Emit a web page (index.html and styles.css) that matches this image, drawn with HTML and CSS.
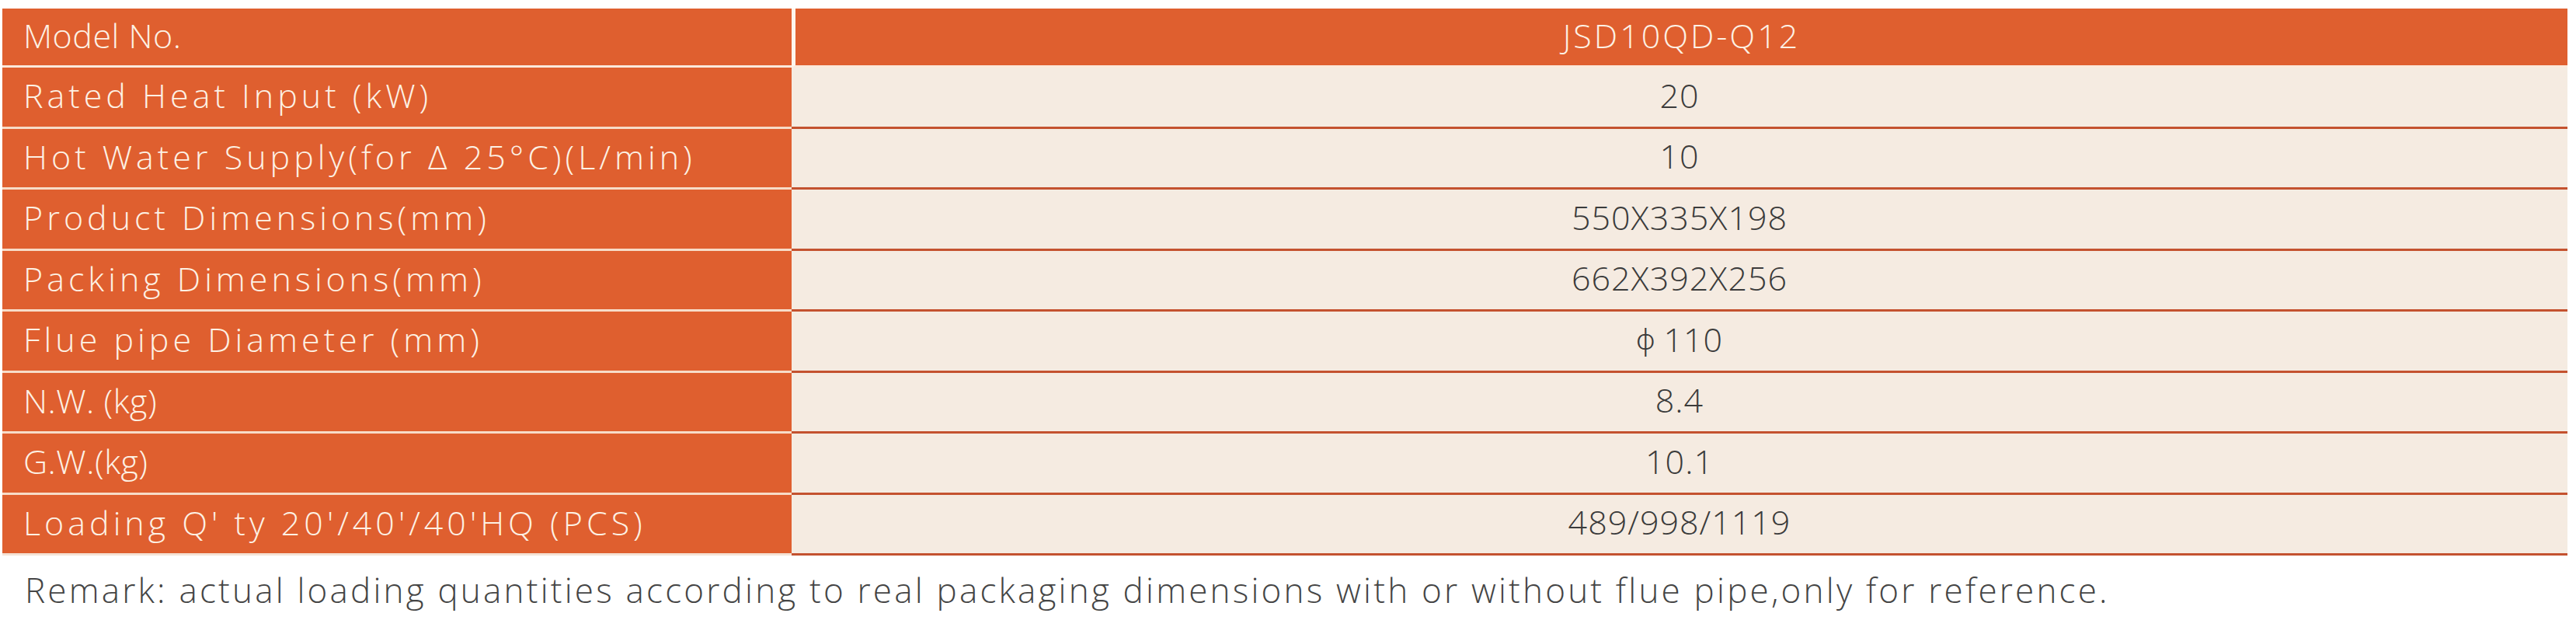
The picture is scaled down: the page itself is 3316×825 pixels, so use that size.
FILE: index.html
```html
<!DOCTYPE html>
<html lang="en">
<head>
<meta charset="utf-8">
<title>JSD10QD-Q12 Specifications</title>
<link rel="stylesheet" href="styles.css">
</head>
<body>
<div class="sheet">
  <div class="spec">
    <div class="row head"><div class="label tight">Model No.</div><div class="value">JSD10QD-Q12</div></div>
    <div class="row"><div class="label">Rated Heat Input (kW)</div><div class="value">20</div></div>
    <div class="row"><div class="label">Hot Water Supply(for Δ 25°C)(L/min)</div><div class="value">10</div></div>
    <div class="row"><div class="label">Product Dimensions(mm)</div><div class="value">550X335X198</div></div>
    <div class="row"><div class="label">Packing Dimensions(mm)</div><div class="value">662X392X256</div></div>
    <div class="row"><div class="label">Flue pipe Diameter (mm)</div><div class="value"><span class="phi">ϕ</span>110</div></div>
    <div class="row"><div class="label tight">N.W. (kg)</div><div class="value">8.4</div></div>
    <div class="row"><div class="label tight">G.W.(kg)</div><div class="value">10.1</div></div>
    <div class="row last"><div class="label">Loading Q' ty 20'/40'/40'HQ (PCS)</div><div class="value">489/998/1119</div></div>
  </div>
  <p class="remark">Remark: actual loading quantities according to real packaging dimensions with or without flue pipe,only for reference.</p>
</div>
</body>
</html>
```
FILE: styles.css
```css
html, body {
  margin: 0;
  padding: 0;
  background: #ffffff;
}

body {
  font-family: "Open Sans", "Noto Sans CJK SC", sans-serif;
  font-weight: 300;
}

.sheet {
  padding: 11px 11px 0 3px;
}

.spec {
  width: 3302px;
}

.row {
  display: grid;
  grid-template-columns: 1016px 1fr;
  height: 78.5px;
}

.row.head {
  height: 76px;
}

.label {
  background: #df5f2f;
  color: #fdf1e4;
  font-size: 43px;
  letter-spacing: 5px;
  display: flex;
  align-items: center;
  padding-left: 27px;
  padding-bottom: 4px;
  border-bottom: 3px solid #f7dcc8;
  white-space: nowrap;
  box-sizing: border-box;
}

.label.tight {
  letter-spacing: 0.5px;
}

.value {
  background: #f5ebe1;
  color: #3b3b3b;
  font-size: 43px;
  letter-spacing: 1px;
  display: flex;
  align-items: center;
  justify-content: center;
  padding-bottom: 5px;
  border-bottom: 3px solid #c4522f;
  box-sizing: border-box;
}

.head .label {
  border-bottom-color: #fbe9db;
}

.head .value {
  background: #df5f2f;
  color: #fdf1e4;
  letter-spacing: 3px;
  border-left: 5px solid #fdf5ec;
  border-bottom-color: #fbe9db;
}

.last .label {
  border-bottom-color: #f4e3d6;
}

.phi {
  font-family: "Noto Sans", "DejaVu Sans", sans-serif;
  font-weight: 300;
  font-size: 36px;
  margin-right: 10px;
}

.remark {
  margin: 16px 0 0 29px;
  font-size: 44px;
  letter-spacing: 3.2px;
  color: #454545;
  line-height: 1.3;
}
```
